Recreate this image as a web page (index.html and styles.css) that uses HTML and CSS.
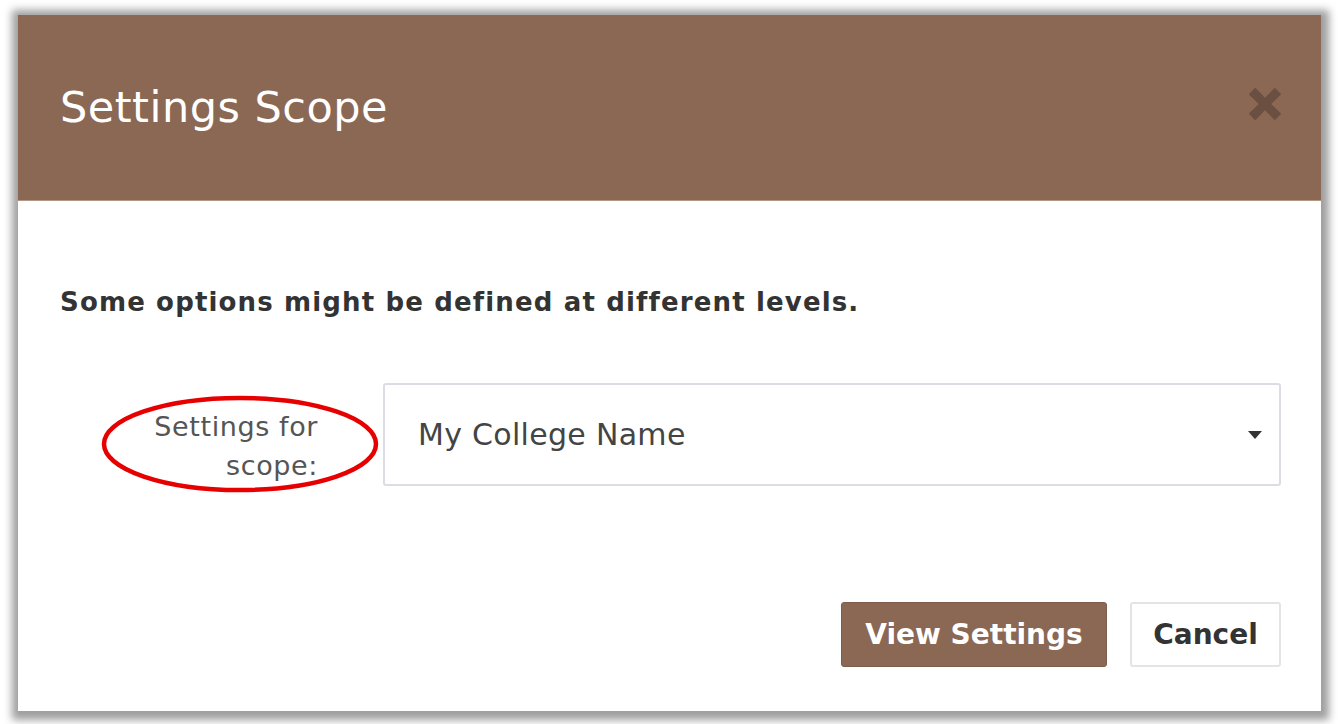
FILE: index.html
```html
<!DOCTYPE html>
<html>
<head>
<meta charset="utf-8">
<link rel="stylesheet" href="styles.css">
</head>
<body>
<div class="modal">
  <div class="modal-header">
    <h1 class="modal-title">Settings Scope</h1>
    <button class="close" aria-label="Close">
      <svg width="36" height="36" viewBox="0 0 36 36"><path d="M5 5 L31 31 M31 5 L5 31" stroke="#6b4f40" stroke-width="9" stroke-linecap="butt"/></svg>
    </button>
  </div>
  <div class="modal-body">
    <p class="intro">Some options might be defined at different levels.</p>
    <div class="form-row">
      <label class="field-label">
        <span>Settings for<br>scope:</span>
        <svg class="ring" width="280" height="100" viewBox="0 0 280 100"><ellipse cx="139" cy="50" rx="136" ry="46" fill="none" stroke="#e60000" stroke-width="4.5"/></svg>
      </label>
      <div class="select">
        <span>My College Name</span>
        <span class="caret"></span>
      </div>
    </div>
  </div>
  <div class="modal-footer">
    <button class="btn btn-primary">View Settings</button>
    <button class="btn btn-default">Cancel</button>
  </div>
</div>
</body>
</html>
```
FILE: styles.css
```css
html, body { margin: 0; padding: 0; background: #ffffff; }
body {
  width: 1338px; height: 724px; overflow: hidden;
  padding: 15px 0 0 18px; box-sizing: border-box;
  font-family: "DejaVu Sans", sans-serif;
}
.modal {
  width: 1303px; height: 696px; background: #fff;
  box-shadow: 1px 2px 8px 7px rgba(0,0,0,0.38);
  display: flex; flex-direction: column;
}
.modal-header {
  height: 186px; background: #8b6854; border-bottom: 1px solid #b49684;
  display: flex; align-items: center; justify-content: space-between;
  padding: 0 38px 0 42px; box-sizing: border-box;
}
.modal-title {
  margin: 0; color: #fff; font-weight: normal; font-size: 43px; letter-spacing: 0.5px;
  position: relative; top: -1px;
}
.close { background: none; border: 0; padding: 0; width: 36px; height: 36px; position: relative; top: -4px; }
.close svg { display: block; }
.modal-body { padding: 86px 40px 0 42px; flex: 1; }
.intro { margin: 0; font-weight: bold; color: #333; font-size: 26px; letter-spacing: 1.15px; }
.form-row { display: flex; align-items: flex-start; margin-top: 66px; }
.field-label {
  position: relative; width: 258px; text-align: right; color: #555; font-size: 27px; line-height: 39px;
  padding-right: 65px; box-sizing: content-box;
}
.field-label span { position: relative; z-index: 1; display: block; padding-top: 24px; letter-spacing: 0.6px; }
.ring { position: absolute; left: 41px; top: 11px; }
.select {
  width: 898px; height: 103px; box-sizing: border-box; border: 2px solid #dcdce4; border-radius: 3px;
  display: flex; align-items: center; justify-content: space-between;
  padding: 0 17px 0 33px; color: #444; font-size: 30px;
}
.select span:first-child { letter-spacing: 0.3px; }
.caret { width: 0; height: 0; border-left: 7px solid transparent; border-right: 7px solid transparent; border-top: 8px solid #333; }
.modal-footer { display: flex; justify-content: flex-end; gap: 23px; padding: 0 40px 44px 0; }
.btn {
  height: 65px; font-family: "DejaVu Sans", sans-serif; font-weight: bold; font-size: 28px;
  border-radius: 3px; cursor: pointer;
}
.btn-primary { width: 266px; background: #8b6854; color: #fff; border: 1px solid #7d5c49; }
.btn-default { width: 151px; background: #fff; color: #333; border: 2px solid #e4e4e4; }
```
